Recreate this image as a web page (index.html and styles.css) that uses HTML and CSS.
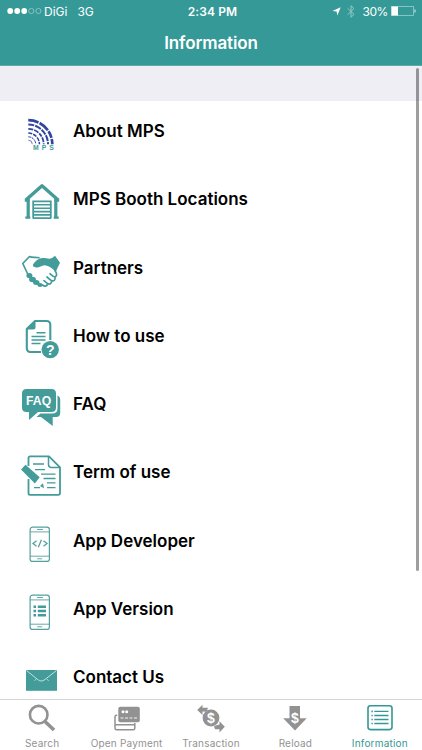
FILE: index.html
```html
<!DOCTYPE html>
<html lang="en">
<head>
    <meta charset="UTF-8">
    <meta name="viewport" content="width=device-width, initial-scale=1.0">
    <title>Information</title>
    <link rel="stylesheet" href="styles.css">
</head>
<body>
    <header class="top">
        <div class="status">
            <div class="status-left">
                <svg width="36" height="10" viewBox="0 0 36 10">
                    <g fill="#fff"><circle cx="3.2" cy="5" r="2.9"/><circle cx="10.2" cy="5" r="2.9"/><circle cx="17.2" cy="5" r="2.9"/></g>
                    <g fill="none" stroke="#a5d2d0" stroke-width=".7"><circle cx="24.3" cy="5" r="2.6"/><circle cx="31.4" cy="5" r="2.6"/></g>
                </svg>
                <span class="carrier">DiGi</span>
                <span class="network">3G</span>
            </div>
            <div class="clock">2:34 PM</div>
            <div class="status-right">
                <svg width="9" height="9" viewBox="0 0 9 9"><path d="M8.7.3 5.3 8.6 4.6 4.5.4 3.9z" fill="#fff"/></svg>
                <svg class="bluetooth" width="8" height="13" viewBox="0 0 8 13"><path d="M.6 3.3 7 9.3 4 12.3V.7l3 2.9L.6 9.7" fill="none" stroke="#93cac7" stroke-width="1"/></svg>
                <span class="percent">30%</span>
                <svg width="25" height="10" viewBox="0 0 25 10"><rect x=".4" y=".4" width="22" height="9.2" fill="none" stroke="#9bcfcc" stroke-width=".8"/><path d="M.5.5h6.5v9H.5z" fill="#fff"/><path d="M23.5 3.5h1v3h-1z" fill="#d5ecea"/></svg>
            </div>
        </div>
        <h1 class="title">Information</h1>
    </header>

    <main class="content">
        <div class="spacer"></div>
        <ul class="menu">
            <li class="item">
                <svg class="icon" viewBox="0 0 48 48">
                    <g fill="none" stroke="#30459b">
                        <path d="M11.3 9.2a24 24 0 0 1 24 24" stroke-width="2.7" stroke-dasharray="10.5 1.2 11 1.2 7 1.2 6"/>
                        <path d="M11.3 13.5a19.7 19.7 0 0 1 19.7 19.7" stroke-width="2" stroke-dasharray="6 1 6.5 1 6 1"/>
                        <path d="M11.3 17.8a15.4 15.4 0 0 1 15.4 15.4" stroke-width="1.8" stroke-dasharray="5 1 5 1 4 1"/>
                        <path d="M11.3 22.1a11.1 11.1 0 0 1 11.1 11.1" stroke-width="1.5" stroke-dasharray="4 1"/>
                        <path d="M11.3 25.8a7.4 7.4 0 0 1 7.4 7.4" stroke-width="1" stroke-dasharray="3 .7"/>
                        <path d="M11.3 29.2a4 4 0 0 1 4 4" stroke-width=".7"/>
                    </g>
                    <text class="mps" x="16" y="39.2">MPS</text>
                </svg>
                <span class="label">About MPS</span>
            </li>
            <li class="item">
                <svg class="icon" viewBox="0 0 48 48">
                    <g fill="none" stroke="#439b9a">
                        <path d="M8.6 21.2 25 6.8l16.4 14.4" stroke-width="3.4" stroke-linejoin="round"/>
                        <path d="M11.2 20v19M38.8 20v19" stroke-width="3.2"/>
                        <path d="M8.3 38.6h5M36.7 38.6h5M7.8 21.6h4.7M37.5 21.6h4.7" stroke-width="2.2"/>
                        <path d="M16.2 39.6V22.4h17.6v17.2" stroke-width="1.8"/>
                        <path d="M16 25.8h18M16 29.2h18M16 32.6h18M16 35.9h18M16 39.1h18" stroke-width="1.6"/>
                    </g>
                </svg>
                <span class="label">MPS Booth Locations</span>
            </li>
            <li class="item">
                <svg class="icon" viewBox="0 0 48 48">
                    <path d="M16 16.5c2-3 5-6 9-6.5 4-.3 7 1.8 10.5-.2l2.5-2 5 7-4.5 9.5c-2.5-4-6.500-6.500-11-7-3 .1-5.500 2.700-8.500 2.200-2.500-.4-3.500-1.500-3-3z" fill="#439b9a"/>
                    <g fill="none" stroke="#439b9a" stroke-width="1.7" stroke-linecap="round" stroke-linejoin="round">
                        <path d="M22 9.700c-3-1-6.500.3-9.500-1.200L5.800 15.500l3 6.500 1.700 3.500"/>
                        <path d="M38 22.500c1.500 2.500 2.500 5 .4 6.200-2 .8-3.500-1.300-5.400-3M38 29c.5 3-1 4.300-3.200 3.800-2-.7-3.200-2.400-4.800-3.800M34.500 33c.3 3-2 3.700-4 2.600l-3.500-3M30.500 36c-.5 2.700-3 2.700-5 1"/>
                    </g>
                    <g fill="#439b9a"><ellipse cx="12.4" cy="27.6" rx="3" ry="2.7"/><ellipse cx="15.5" cy="31.5" rx="3.4" ry="2.8"/><ellipse cx="19.3" cy="34.5" rx="3.2" ry="2.5"/><ellipse cx="23" cy="37" rx="2.6" ry="2.1"/></g>
                </svg>
                <span class="label">Partners</span>
            </li>
            <li class="item">
                <svg class="icon" viewBox="0 0 48 48">
                    <path d="M33.3 24V8.5A3.5 3.5 0 0 0 29.8 5H18l-8.200 8v19.500a3.500 3.500 0 0 0 3.500 3.500H24" fill="none" stroke="#439b9a" stroke-width="2.1"/>
                    <path d="M18.500 4.500v6.500q0 2.500-2.500 2.500H9.500z" fill="#439b9a"/>
                    <path d="M19.500 16.800h9M14.500 20.400h14M14.500 24h14M14.500 27.600h9" stroke="#439b9a" stroke-width="1.5"/>
                    <circle cx="33.2" cy="33.6" r="8.7" fill="#439b9a"/>
                    <text class="question" x="33.2" y="38.7">?</text>
                </svg>
                <span class="label">How to use</span>
            </li>
            <li class="item">
                <svg class="icon" viewBox="0 0 48 48">
                    <path d="M40.5 11.5q2.700 1 2.700 4v13q0 4.500-4 4.500h-3.500v9L24 33h-4.500l4-3.500H35q5.500 0 5.500-5z" fill="#439b9a"/>
                    <path d="M9.500 5h25q4.500 0 4.500 4.500v14q0 4.500-4.500 4.500H21l-9 8v-8H9.500Q5 28 5 23.500v-14Q5 5 9.500 5z" fill="#439b9a"/>
                    <text class="faq" x="21.6" y="20.6">FAQ</text>
                </svg>
                <span class="label">FAQ</span>
            </li>
            <li class="item">
                <svg class="icon" viewBox="0 0 48 48">
                    <g fill="none" stroke="#439b9a" stroke-width="1.8">
                        <path d="M11.500 14V6q0-1.600 1.600-1.600H32l11 11V41q0 1.800-1.800 1.800H13.100q-1.600 0-1.600-1.600V27"/>
                        <path d="M31.500 4.500v8q0 3 3 3h8.300" stroke-width="1.5"/>
                        <path d="M16 12h11M18 17.700h10M24 22.200h14.500M26.500 26.500h12M30 30.800h8.500M30 35.600h8.500M17 35.600h6" stroke-width="1.3"/>
                    </g>
                    <path d="m4 17.500 4.500-4.700 14.200 12.400-4.800 6.300z" fill="#439b9a"/>
                    <path d="m23 34 3-2.700 1 5z" fill="#439b9a"/>
                </svg>
                <span class="label">Term of use</span>
            </li>
            <li class="item">
                <svg class="icon" viewBox="0 0 48 48">
                    <g fill="none" stroke="#559f9f">
                        <rect x="13.1" y="6.2" width="19.3" height="34.2" rx="2.5" stroke-width="1.2"/>
                        <path d="M13 10.900h19.400M13 35.200h19.400" stroke-width=".9"/>
                        <path d="M20 8.500h6M20.200 37.800h5" stroke-width=".9"/>
                        <path d="m19.500 19.700-3.500 2.800 3.500 2.800M26.500 19.700l3.500 2.800-3.500 2.800M24.500 18.700l-3.200 7.600" stroke-width="1.3"/>
                    </g>
                </svg>
                <span class="label">App Developer</span>
            </li>
            <li class="item">
                <svg class="icon" viewBox="0 0 48 48">
                    <g fill="none" stroke="#559f9f">
                        <rect x="13.1" y="6.2" width="19.3" height="34.2" rx="2.5" stroke-width="1.2"/>
                        <path d="M13 10.900h19.400M13 35.200h19.400" stroke-width=".9"/>
                        <path d="M20 8.500h6M20.200 37.800h5" stroke-width=".9"/>
                        <path d="M16.500 17.700h2.500M20.800 17.700H29M16.500 22h2.500M20.800 22H29M16.500 26.300h2.500M20.800 26.300H29" stroke="#439b9a" stroke-width="2.5"/>
                    </g>
                </svg>
                <span class="label">App Version</span>
            </li>
            <li class="item">
                <svg class="icon" viewBox="0 0 48 48">
                    <path d="M9 13h31v20.800H9z" fill="#439b9a"/>
                    <path d="m9.500 13.500 11 8.900q3.800 3.200 7.600 0l11.400-8.900M19 22.200l-1.500 1.600M30 22.200l1.500 1.600" fill="none" stroke="#d3e9e8" stroke-width=".9"/>
                </svg>
                <span class="label">Contact Us</span>
            </li>
        </ul>
        <div class="scrollbar"></div>
    </main>

    <nav class="tabs">
        <a class="tab">
            <svg width="30" height="30" viewBox="0 0 30 30"><g fill="none" stroke="#929292"><circle cx="11.7" cy="10.7" r="8.8" stroke-width="2.6"/><path d="m18 17.500 9 8.500" stroke-width="3.6"/></g></svg>
            <span>Search</span>
        </a>
        <a class="tab">
            <svg width="30" height="30" viewBox="0 0 30 30">
                <path d="M5.200 11.200H4.500q-1.500 0-1.500 1.500v11.500q0 1.500 1.500 1.500h16.800q1.500 0 1.500-1.500V19M3 20.700h19.800" fill="none" stroke="#929292" stroke-width="1.5"/>
                <rect x="6.3" y="2.7" width="21.5" height="15.6" rx="2" fill="#929292"/>
                <circle cx="11" cy="7.7" r="1.5" fill="#fff"/><circle cx="14.7" cy="7.7" r="1.5" fill="#fff"/>
                <path d="M8.500 14h18" stroke="#fff" stroke-width=".9" stroke-dasharray="3 1.5"/>
            </svg>
            <span>Open Payment</span>
        </a>
        <a class="tab">
            <svg width="30" height="30" viewBox="0 0 30 30">
                <path d="M1.200 6 6.500.8v3H12l-1.500 4-4-.2v3.500zM28.800 22.700l-5.300-5.500v3.300L18 22l1 3.300h4.500v3.300z" fill="#929292"/>
                <circle cx="15" cy="14" r="8.4" fill="#929292"/>
                <text class="dollar" x="15" y="18.8">$</text>
            </svg>
            <span>Transaction</span>
        </a>
        <a class="tab">
            <svg width="30" height="30" viewBox="0 0 30 30">
                <path d="M9.500 2H20v12.200h6.700L15 26.500 3.200 14.200h6.300z" fill="#929292"/>
                <text class="dollar" x="14.9" y="18.8">$</text>
            </svg>
            <span>Reload</span>
        </a>
        <a class="tab active">
            <svg width="30" height="30" viewBox="0 0 30 30">
                <g fill="none" stroke="#359896"><rect x="3" y="1.8" width="24" height="23.8" rx="2.5" stroke-width="1.6"/>
                <path d="M9.300 7.400h14.200M9.300 11.500h14.200M9.300 15.500h14.200M9.300 19.500h14.200" stroke-width="1.4"/>
                <path d="M6.400 7.400h1.400M6.400 11.500h1.400M6.400 15.500h1.400M6.400 19.500h1.400" stroke-width="1.6"/></g>
            </svg>
            <span>Information</span>
        </a>
    </nav>
</body>
</html>
```
FILE: styles.css
```css
* {
    box-sizing: border-box;
}
body {
    margin: 0;
    height: 750px;
    display: flex;
    flex-direction: column;
    overflow: hidden;
    background-color: #fff;
    font-family: Inter, "Liberation Sans", sans-serif;
}
.top {
    height: 66px;
    flex: none;
    background-color: #349997;
    border-bottom: 1px solid #5cacaa;
    color: #fff;
}
.status {
    display: grid;
    grid-template-columns: 1fr auto 1fr;
    align-items: center;
    height: 22px;
    padding: 0 6px 0 7px;
    font-size: 12px;
}
.status-left, .status-right {
    display: flex;
    align-items: center;
}
.status-right {
    justify-content: flex-end;
}
.carrier {
    margin-left: 1px;
}
.network {
    margin-left: 10px;
}
.clock {
    padding-left: 2px;
    font-weight: 600;
    letter-spacing: 0.1px;
}
.bluetooth {
    margin: 0 7px 0 6px;
}
.percent {
    margin-right: 3px;
    letter-spacing: -0.4px;
}
.title {
    margin: 0;
    font-size: 17px;
    font-weight: 600;
    line-height: 43px;
    letter-spacing: -0.1px;
    text-align: center;
}
.content {
    flex: 1;
    position: relative;
    overflow: hidden;
}
.spacer {
    height: 35px;
    background-color: #efeef4;
}
.menu {
    margin: 0;
    padding: 0;
    list-style: none;
}
.item {
    display: flex;
    align-items: center;
    height: 68.25px;
    padding-left: 17px;
}
.icon {
    width: 48px;
    height: 48px;
    margin-right: 8px;
    flex: none;
}
.label {
    padding-bottom: 8px;
    font-size: 17px;
    font-weight: 600;
    color: #000;
}
.mps, .question, .faq, .dollar {
    font-family: "Liberation Sans", sans-serif;
    font-weight: bold;
}
.mps {
    font-size: 6.8px;
    letter-spacing: 3px;
    fill: #439b9a;
}
.question {
    font-size: 14px;
    text-anchor: middle;
    fill: #fff;
}
.faq {
    font-size: 12.2px;
    text-anchor: middle;
    fill: #fff;
}
.dollar {
    font-size: 14px;
    text-anchor: middle;
    fill: #fff;
}
.scrollbar {
    position: absolute;
    top: 2px;
    right: 3px;
    width: 3px;
    height: 503px;
    border-radius: 2px;
    background-color: rgba(0, 0, 0, 0.38);
}
.tabs {
    display: flex;
    flex: none;
    height: 51px;
    border-top: 1px solid #d5d5d5;
    background-color: #fff;
}
.tab {
    flex: 1;
    display: flex;
    flex-direction: column;
    align-items: center;
    padding-top: 4px;
    font-size: 10px;
    line-height: 12px;
    letter-spacing: 0.2px;
    white-space: nowrap;
    color: #929292;
}
.tab span {
    margin-top: 3px;
}
.active {
    color: #359896;
}
```
